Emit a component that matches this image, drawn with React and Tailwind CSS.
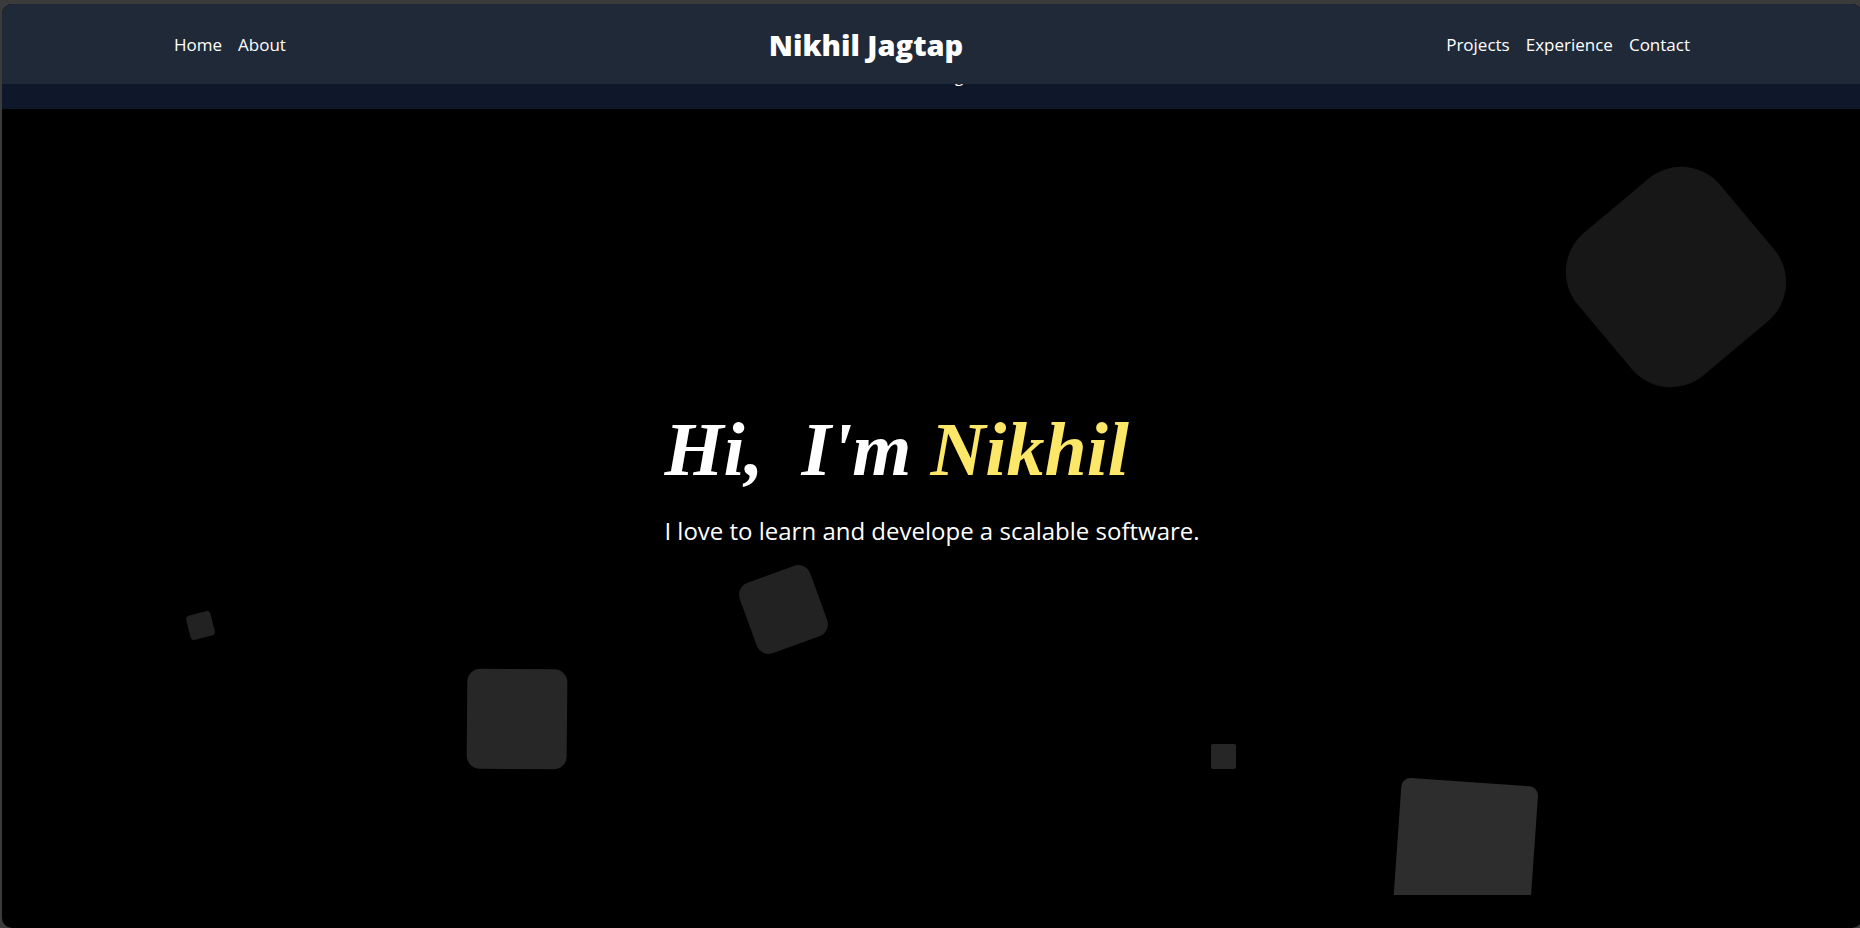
const squares = [
  "left-[10%] top-[504px] size-[25px] rounded-[4px] -rotate-[14deg] bg-[#222222]",
  "left-[25%] top-[560px] size-[100px] rounded-[13px] rotate-[0.5deg] bg-[#272727]",
  "left-[40%] top-[463px] size-[75px] rounded-[13px] -rotate-[20deg] bg-[#222222]",
  "left-[65%] top-[635px] size-[25px] rounded-[2px] bg-[#262626]",
  "left-[75%] top-[673px] size-[137px] rounded-[9px] rotate-[4deg] bg-[#2d2d2d]",
  "left-[85%] top-[75px] size-[186px] rounded-[51px] rotate-[50deg] bg-[#171717]",
];

function NavLinks({ items }) {
  return (
    <ul className="flex gap-4">
      {items.map((item) => (
        <li key={item}>
          <a href={"#" + item.toLowerCase()} className="text-[17px] leading-7 text-white">
            {item}
          </a>
        </li>
      ))}
    </ul>
  );
}

export default function App() {
  return (
    <div className="flex min-h-screen flex-col overflow-hidden bg-[#3b3b3b] pt-1 pl-0.5 font-['Segoe_UI','Open_Sans',sans-serif]">
      <div className="-mr-0.5 flex grow flex-col overflow-hidden rounded-[10px] bg-black">
        <header className="relative z-10 bg-[#1f2937]">
          <nav className="mx-auto flex h-20 max-w-[1516px] items-center justify-between pt-0.5">
            <NavLinks items={["Home", "About"]} />
            <h1 className="text-[29px] leading-9 font-extrabold text-white">Nikhil Jagtap</h1>
            <NavLinks items={["Projects", "Experience", "Contact"]} />
          </nav>
        </header>
        <div className="flex h-[25px] justify-center bg-[#0f172a] pl-[54px]">
          <span className="-mt-5 text-base leading-6 text-white">g</span>
        </div>
        <main className="relative flex h-[786px] flex-col items-center overflow-hidden bg-black">
          {squares.map((shape) => (
            <div key={shape} aria-hidden="true" className={"absolute " + shape} />
          ))}
          <div className="relative pt-[294px] text-white">
            <h2 className="font-['Brush_Script_MT','Liberation_Serif',cursive] text-[76px] leading-[92px] font-bold italic">
              Hi,&nbsp; I'm <span className="text-[#fde768]">Nikhil</span>
            </h2>
            <p className="mt-[18px] text-2xl leading-9">I love to learn and develope a scalable software.</p>
          </div>
        </main>
      </div>
    </div>
  );
}
